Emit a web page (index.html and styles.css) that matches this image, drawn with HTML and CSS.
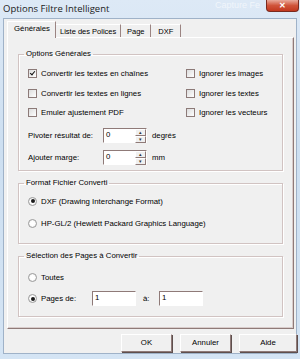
FILE: index.html
```html
<!DOCTYPE html>
<html>
<head>
    <title>Options Filtre Intelligent</title>
    <link rel="stylesheet" href="styles.css">
</head>
<body>
    <div class="window">

        <div class="titlebar">
            <span class="title">Options Filtre Intelligent</span>
            <span class="ghost">Capture Fe</span>
            <span class="close">&#x2715;</span>
        </div>

        <div class="client">

            <div class="tabs">
                <span class="tab active">Générales</span>
                <span class="tab">Liste des Polices</span>
                <span class="tab">Page</span>
                <span class="tab">DXF</span>
            </div>

            <div class="panel">

                <fieldset class="group group-options">
                    <legend>Options Générales</legend>
                    <div class="options-grid">
                        <label class="row"><span class="check checked"></span>Convertir les textes en chaînes</label>
                        <label class="row"><span class="check"></span>Ignorer les images</label>
                        <label class="row"><span class="check"></span>Convertir les textes en lignes</label>
                        <label class="row"><span class="check"></span>Ignorer les textes</label>
                        <label class="row"><span class="check"></span>Emuler ajustement PDF</label>
                        <label class="row"><span class="check"></span>Ignorer les vecteurs</label>
                    </div>
                    <div class="spin-row first">
                        <span class="spin-label">Pivoter résultat de:</span>
                        <span class="spinner"><span class="field">0</span><span class="arrows"><span>&#9652;</span><span>&#9662;</span></span></span>
                        <span class="unit">degrés</span>
                    </div>
                    <div class="spin-row">
                        <span class="spin-label">Ajouter marge:</span>
                        <span class="spinner"><span class="field">0</span><span class="arrows"><span>&#9652;</span><span>&#9662;</span></span></span>
                        <span class="unit">mm</span>
                    </div>
                </fieldset>

                <fieldset class="group group-format">
                    <legend>Format Fichier Converti</legend>
                    <label class="row radio-row top-row"><span class="radio selected"></span>DXF (Drawing Interchange Format)</label>
                    <label class="row radio-row"><span class="radio"></span>HP-GL/2 (Hewlett Packard Graphics Language)</label>
                </fieldset>

                <fieldset class="group group-pages">
                    <legend>Sélection des Pages à Convertir</legend>
                    <label class="row radio-row top-row"><span class="radio"></span>Toutes</label>
                    <div class="row radio-row">
                        <span class="radio selected"></span>
                        <span class="pages-label">Pages de:</span>
                        <span class="field page-field">1</span>
                        <span class="to-label">à:</span>
                        <span class="field page-field">1</span>
                    </div>
                </fieldset>

            </div>

            <div class="buttons">
                <span class="button">OK</span>
                <span class="button">Annuler</span>
                <span class="button button-wide">Aide</span>
            </div>

        </div>
    </div>
</body>
</html>
```

FILE: styles.css
```css
html, body
{
    margin: 0;
    padding: 0;
}

body
{
    width: 300px;
    height: 359px;
    overflow: hidden;
    font-family: "Liberation Sans", Arial, sans-serif;
    font-size: 7.8px;
    color: #000;
}

.window
{
    width: 300px;
    height: 359px;
    box-sizing: border-box;
    padding: 0 3px 5px 3px;
    background: linear-gradient(to bottom, #dde9f6, #cddff1 40%, #d4e4f4);
    display: flex;
    flex-direction: column;
}

.titlebar
{
    height: 18px;
    display: flex;
    align-items: flex-start;
    flex-shrink: 0;
}

.title
{
    font-family: "Open Sans", "Liberation Sans", sans-serif;
    font-size: 9.5px;
    margin-top: 2px;
    color: #1b1b1b;
    white-space: nowrap;
}

.ghost
{
    margin-left: auto;
    margin-right: 6px;
    font-size: 9px;
    line-height: 10px;
    color: rgba(255, 255, 255, 0.6);
    white-space: nowrap;
}

.close
{
    width: 33px;
    height: 12px;
    margin-right: -2px;
    border: 1px solid #7a2a1e;
    border-top: none;
    border-radius: 0 0 4px 4px;
    background: linear-gradient(to bottom, #e9a99a, #d0543a 50%, #c2381e);
    color: #fff;
    font-size: 8px;
    font-weight: bold;
    text-align: center;
    line-height: 11px;
    box-sizing: border-box;
}

.client
{
    flex: 1;
    background: #f0f0f0;
    border: 1px solid #9fb2c8;
    padding: 3px 3px 0 3px;
    display: flex;
    flex-direction: column;
}

.tabs
{
    display: flex;
    align-items: flex-end;
    height: 15px;
    flex-shrink: 0;
    position: relative;
    z-index: 1;
}

.tab
{
    height: 13px;
    min-width: 30px;
    line-height: 13px;
    padding: 0 4px;
    border: 1px solid #fff;
    border-bottom: none;
    border-right: 1px solid #9b8482;
    box-sizing: border-box;
    white-space: nowrap;
    text-align: center;
    font-size: 7.5px;
    background: #f0f0f0;
}

.tab + .tab
{
    border-left: none;
}

.tab.active
{
    height: 17px;
    line-height: 14px;
    padding: 0 5px 0 6px;
    font-size: 7.8px;
    margin-bottom: -1px;
}

.panel
{
    height: 292px;
    flex-shrink: 0;
    box-sizing: border-box;
    border: 1px solid #fff;
    border-right: 1px solid #8f7a78;
    border-bottom: 1px solid #8f7a78;
    box-shadow: inset -1px -1px 0 #d8cccb;
    padding: 10px 10px 0 10px;
    width: 287px;
}

.group
{
    margin: 0;
    padding: 0 0 0 9px;
    border: 1px solid #d1c3c2;
    box-shadow: inset 1px 1px 0 #fff, 1px 1px 0 #fff;
    min-width: 0;
    box-sizing: border-box;
}

.group legend
{
    padding: 0 2px;
    margin-left: -4px;
    line-height: 12px;
}

.group-options
{
    height: 123px;
}

.options-grid
{
    display: grid;
    grid-template-columns: 158px 1fr;
    grid-auto-rows: 19.5px;
    margin-top: 4px;
}

.row
{
    display: flex;
    align-items: center;
    white-space: nowrap;
}

.check
{
    width: 7px;
    height: 7px;
    border: 1px solid #8c7a78;
    background: linear-gradient(135deg, #dcdcdc, #fff);
    margin-right: 4px;
    position: relative;
    flex-shrink: 0;
}

.check.checked::after
{
    content: "";
    position: absolute;
    left: 2px;
    top: 0;
    width: 2px;
    height: 4px;
    border: solid #111;
    border-width: 0 1.5px 1.5px 0;
    transform: rotate(40deg);
}

.spin-row
{
    display: flex;
    align-items: center;
    height: 22px;
}

.spin-row.first
{
    margin-top: 2px;
}

.spin-label
{
    width: 75px;
}

.spinner
{
    display: flex;
    height: 15px;
    width: 44px;
    box-sizing: border-box;
    border: 1px solid #8f7a78;
    border-right-color: #fff;
    border-bottom-color: #fff;
    background: #fff;
}

.spinner .field
{
    flex: 1;
    padding-left: 2px;
    line-height: 12px;
}

.arrows
{
    width: 11px;
    display: flex;
    flex-direction: column;
}

.arrows span
{
    flex: 1;
    background: #f0f0f0;
    border: 1px solid #fff;
    border-right-color: #8f7a78;
    border-bottom-color: #8f7a78;
    font-size: 5px;
    line-height: 5px;
    text-align: center;
    color: #333;
}

.unit
{
    margin-left: 5px;
}

.group-format
{
    margin-top: 6px;
    height: 67px;
}

.radio
{
    width: 7px;
    height: 7px;
    border: 1px solid #9a9a9a;
    border-radius: 50%;
    background: radial-gradient(circle, #fff 40%, #e4e4e4);
    margin-right: 4px;
    position: relative;
    flex-shrink: 0;
}

.radio.selected::after
{
    content: "";
    position: absolute;
    left: 1.5px;
    top: 1.5px;
    width: 4px;
    height: 4px;
    border-radius: 50%;
    background: #1a1a1a;
}

.radio-row
{
    height: 22px;
}

.group-format .top-row
{
    margin-top: 1px;
}

.group-pages
{
    margin-top: 6px;
    height: 67px;
}

.group-pages .top-row
{
    margin-top: 5px;
}

.group-pages .radio-row
{
    height: 21px;
}

.pages-label
{
    width: 51px;
}

.page-field
{
    width: 44px;
    height: 15px;
    box-sizing: border-box;
    border: 1px solid #8f7a78;
    border-right-color: #fff;
    border-bottom-color: #fff;
    background: #fff;
    padding-left: 2px;
    line-height: 12px;
}

.to-label
{
    width: 23px;
    padding-left: 7px;
    box-sizing: border-box;
}

.buttons
{
    display: flex;
    justify-content: flex-end;
    gap: 8px;
    margin-top: 5px;
    width: 290px;
}

.button
{
    width: 51px;
    height: 18px;
    box-sizing: border-box;
    border: 1px solid #fff;
    border-right-color: #8f7a78;
    border-bottom-color: #8f7a78;
    box-shadow: 1px 1px 0 #5e4f4d;
    text-align: center;
    line-height: 16px;
    background: #f0f0f0;
}

.button-wide
{
    width: 58px;
}
```
